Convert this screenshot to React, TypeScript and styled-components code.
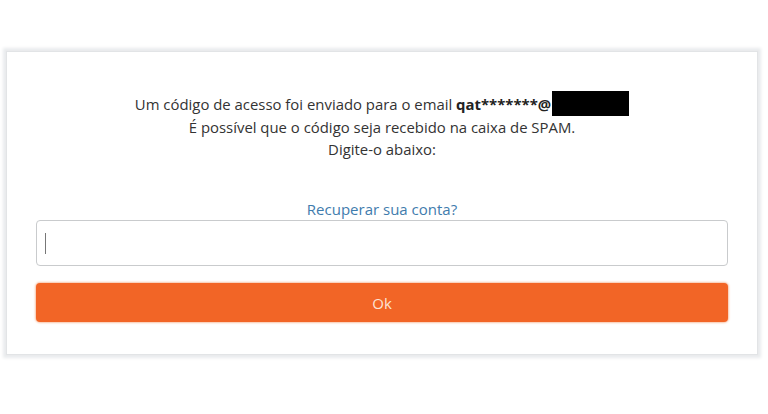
import React from 'react'
import styled, { createGlobalStyle } from 'styled-components'

const GlobalStyle = createGlobalStyle`
    html, body {
        margin: 0;
        padding: 0;
        background: #ffffff;
        font-family: 'Open Sans', 'Noto Sans', sans-serif;
    }
`

const Page = styled.div`
    width: 768px;
    height: 414px;
    padding: 51px 10px 0 6px;
    box-sizing: border-box;
`

const Card = styled.div`
    display: flex;
    flex-direction: column;
    align-items: stretch;
    background: #ffffff;
    border: 1px solid #e2e4e6;
    box-shadow: 0px 0px 3px 3px #e9ebed;
    padding: 39px 29px 32px 29px;
`

const Message = styled.div`
    display: flex;
    flex-direction: column;
    align-items: center;
    font-size: 14.9px;
    line-height: 22px;
    color: #333333;
`

const Line = styled.div`
    display: flex;
    align-items: center;
    white-space: nowrap;
`

const Email = styled.b`
    font-weight: 700;
    color: #222222;
`

const Redacted = styled.span`
    display: inline-block;
    width: 77px;
    height: 25px;
    background: #000000;
    margin-left: 1px;
`

const RecoverLink = styled.a`
    align-self: center;
    margin-top: 39px;
    font-size: 15px;
    line-height: 20px;
    color: #3f7cad;
    text-decoration: none;
    cursor: pointer;
`

const CodeInput = styled.div`
    display: flex;
    align-items: center;
    height: 46px;
    margin-top: 1px;
    border: 1px solid #c9cbcd;
    border-radius: 4px;
    padding: 0 8px;
    box-sizing: border-box;
`

const Caret = styled.span`
    display: block;
    width: 1px;
    height: 21px;
    background: #777777;
`

const OkButton = styled.button`
    height: 39px;
    margin-top: 17px;
    border: none;
    border-radius: 4px;
    background: #f26526;
    color: #fde3d4;
    font-family: 'Open Sans', 'Noto Sans', sans-serif;
    font-size: 15px;
    box-shadow: 0px 0px 2px 1px #f8c4a8;
    cursor: pointer;
`

const App: React.FC = () => {
    return (
        <Page>
            <GlobalStyle />
            <Card>
                <Message>
                    <Line>
                        Um código de acesso foi enviado para o email&nbsp;<Email>qat*******@</Email>
                        <Redacted />
                    </Line>
                    <Line>É possível que o código seja recebido na caixa de SPAM.</Line>
                    <Line>Digite-o abaixo:</Line>
                </Message>
                <RecoverLink>Recuperar sua conta?</RecoverLink>
                <CodeInput>
                    <Caret />
                </CodeInput>
                <OkButton>Ok</OkButton>
            </Card>
        </Page>
    )
}

export default App
